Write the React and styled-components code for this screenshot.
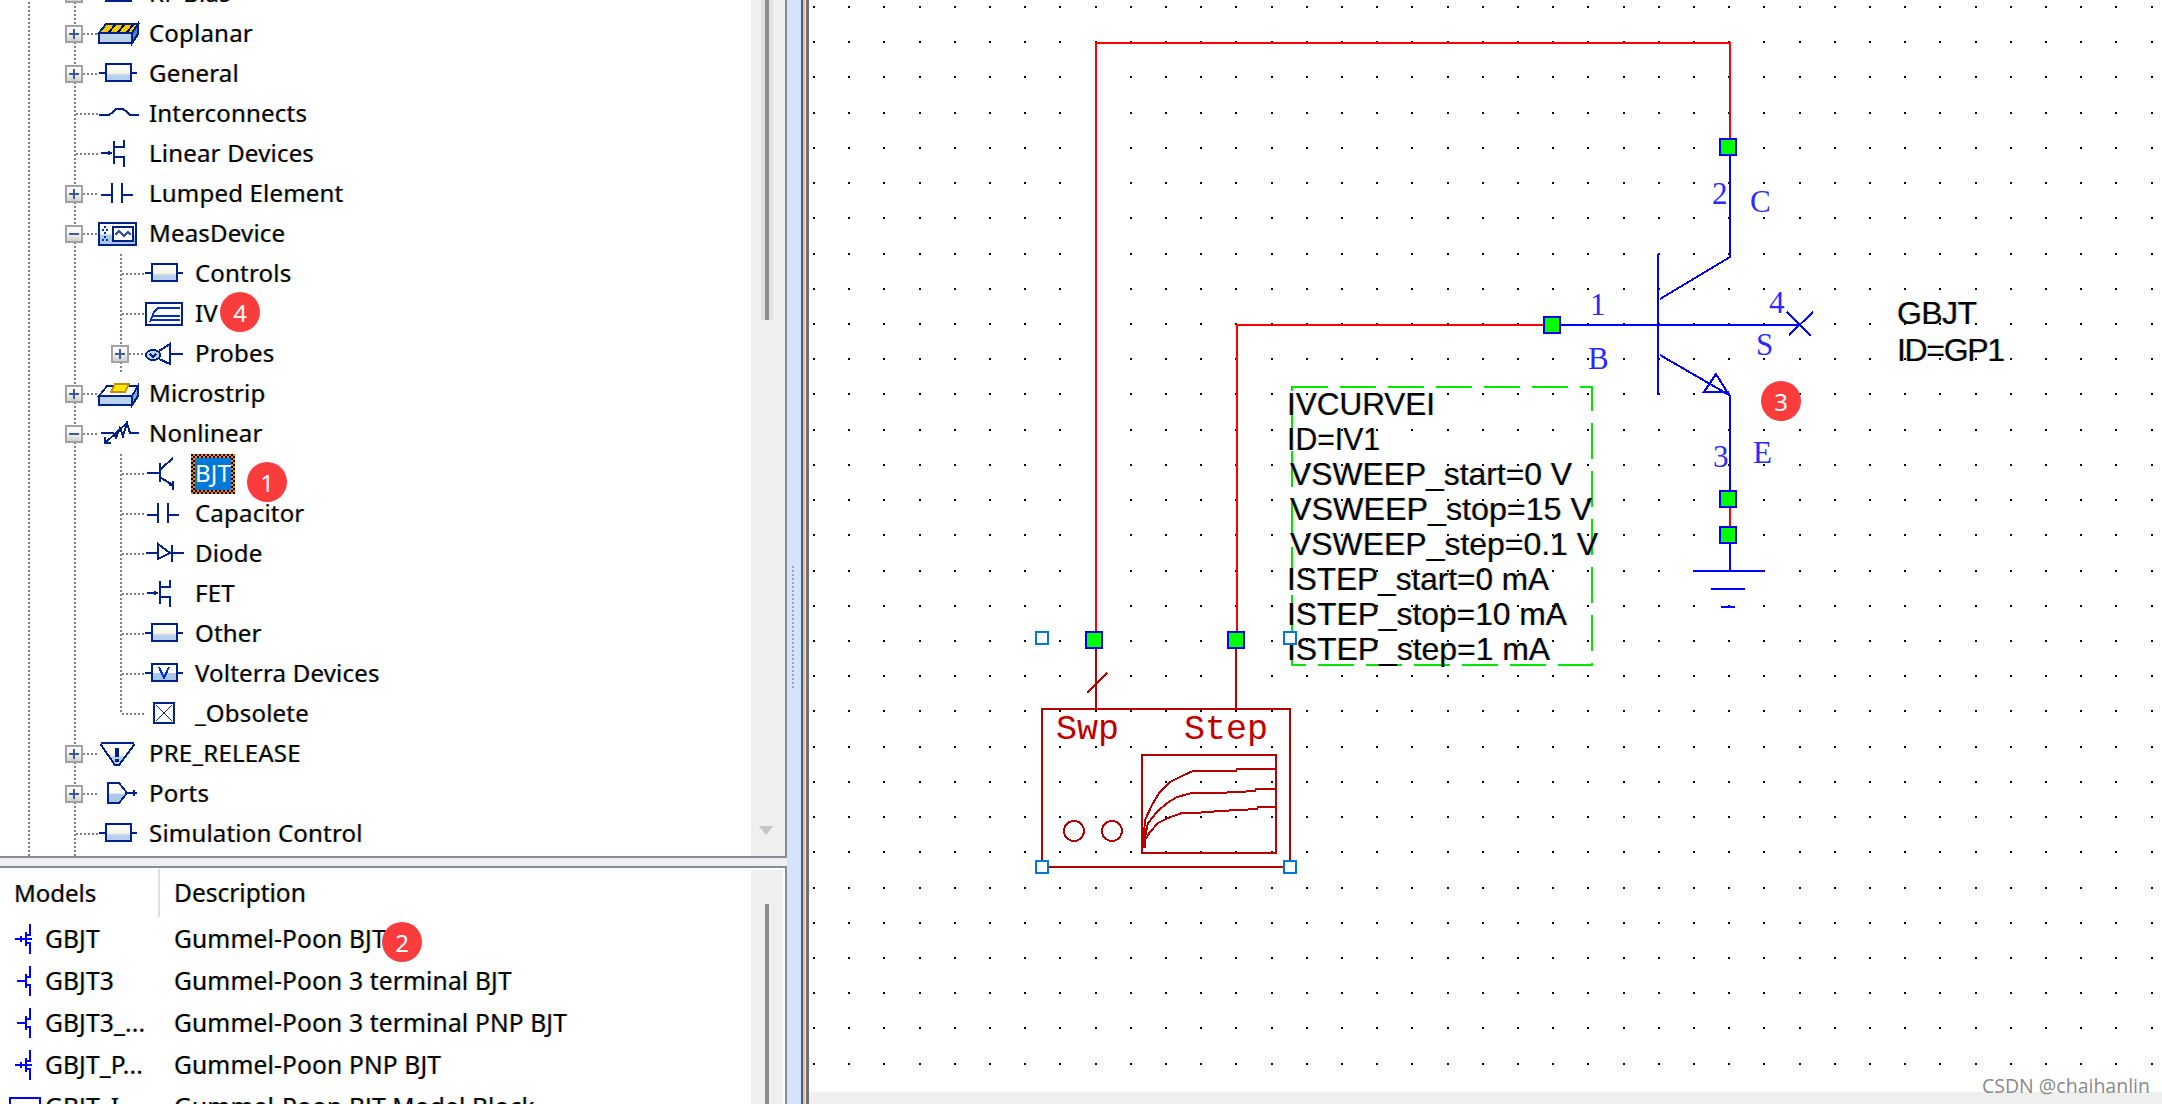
import React from 'react';
import styled, { createGlobalStyle } from 'styled-components';

const NAVY = '#002288';
const UI_FONT = '"Noto Sans", "Open Sans", sans-serif';
const FRINGE = '-0.7px 0 rgba(255,140,0,.45), 0.7px 0 rgba(0,170,255,.45)';

const Global = createGlobalStyle`
  html, body { margin: 0; padding: 0; background: #fff; overflow: hidden; }
`;

const Page = styled.div`
  position: relative;
  display: flex;
  width: 2162px;
  height: 1104px;
  overflow: hidden;
  font-family: ${UI_FONT};
  color: #000;
`;
const SidePanel = styled.div`
  width: 787px;
  flex: none;
  display: flex;
  flex-direction: column;
`;
const TreePane = styled.div`
  height: 856px;
  flex: none;
  display: flex;
  border-right: 2px solid #868b98;
  border-bottom: 2px solid #868b98;
`;
const Tree = styled.div`
  flex: 1;
  overflow: hidden;
`;
const TreeInner = styled.div`
  margin-top: -26px;
`;
const TreeScroll = styled.div`
  width: 34px;
  flex: none;
  display: flex;
  flex-direction: column;
  align-items: center;
  background: linear-gradient(to right, #efefef 10px, #e0e0e0 10px 14px, #8c8c8c 14px 18px, #e0e0e0 18px 22px, #efefef 22px) 0 0 / 100% 320px no-repeat #efefef;
  padding-top: 826px;
  box-sizing: border-box;
  padding-right: 4px;
`;
const ArrowDown = styled.div`
  width: 0;
  height: 0;
  border-left: 7px solid transparent;
  border-right: 7px solid transparent;
  border-top: 9px solid #c4c4c4;
`;
const Sash = styled.div`
  height: 8px;
  flex: none;
  background: #efefef;
`;
const ListPane = styled.div`
  flex: 1;
  min-height: 0;
  display: flex;
  border-top: 2px solid #868b98;
  border-right: 2px solid #868b98;
`;
const ListBody = styled.div`
  flex: 1;
  overflow: hidden;
`;
const ListScroll = styled.div`
  width: 32px;
  flex: none;
  margin: 2px 2px 0 0;
  padding: 34px 0 0 14px;
  box-sizing: border-box;
  background: #efefef;
`;
const ListThumb = styled.div`
  width: 4px;
  height: 100%;
  background: #8c8c8c;
`;
const ListHeader = styled.div`
  height: 50px;
  display: flex;
  align-items: center;
`;
const HeadModels = styled.div`
  width: 160px;
  height: 48px;
  flex: none;
  box-sizing: border-box;
  display: flex;
  align-items: center;
  padding: 0 0 2px 14px;
  border-right: 2px solid #e0e0e0;
  font-size: 24px;
  text-shadow: ${FRINGE};
`;
const HeadDesc = styled.div`
  padding: 0 0 2px 14px;
  font-size: 24.5px;
  text-shadow: ${FRINGE};
`;
const ListRow = styled.div`
  height: 42px;
  display: flex;
  align-items: center;
  font-size: 24.5px;
  letter-spacing: 0.18px;
  white-space: nowrap;
  text-shadow: ${FRINGE};
`;
const ModelCell = styled.div`
  width: 174px;
  flex: none;
  display: flex;
  align-items: center;
  padding-left: 13px;
  box-sizing: border-box;
  gap: 12px;
`;
const RowText = styled.span`
  padding-bottom: 1px;
`;

const Row = styled.div`
  display: flex;
  align-items: center;
  height: 40px;
  white-space: nowrap;
  font-size: 24px;
  letter-spacing: 0.2px;
  text-shadow: ${FRINGE};
`;
const vLine = () => `linear-gradient(#808080 50%, transparent 50%) 28px 0 / 2px 4px repeat-y`;
const Gutter = styled.div`
  width: 46px;
  height: 40px;
  flex: none;
  background: ${({ $line }) => ($line ? vLine() : 'none')};
`;
const Branch = styled.div`
  width: 53px;
  height: ${({ $end }) => ($end ? '20px' : '40px')};
  align-self: flex-start;
  flex: none;
  position: relative;
  display: flex;
  align-items: center;
  background: ${vLine()};
`;
const BranchInner = styled.div`
  position: absolute;
  left: 0;
  right: 0;
  top: 0;
  height: 40px;
  display: flex;
  align-items: center;
  padding-left: ${({ $box }) => ($box ? '19px' : '30px')};
  box-sizing: border-box;
`;
const Expander = styled.div`
  width: 18px;
  height: 18px;
  flex: none;
  box-sizing: border-box;
  border: 2px solid #a2a2a2;
  background: linear-gradient(#ffffff, #f2f2f2 50%, #cfcfcf);
  position: relative;
  &::before {
    content: '';
    position: absolute;
    left: 2px;
    right: 2px;
    top: 6px;
    height: 2px;
    background: #3a5a9c;
  }
  &::after {
    content: '';
    display: ${({ $open }) => ($open ? 'none' : 'block')};
    position: absolute;
    top: 2px;
    bottom: 2px;
    left: 6px;
    width: 2px;
    background: #3a5a9c;
  }
`;
const Connector = styled.div`
  flex: 1;
  height: 2px;
  background: linear-gradient(to right, #808080 50%, transparent 50%) 0 0 / 4px 2px repeat-x;
`;
const IconBox = styled.svg`
  width: 40px;
  height: 40px;
  flex: none;
  overflow: visible;
  shape-rendering: crispEdges;
`;
const Label = styled.span`
  margin-left: 6px;
  padding: 0 4px 3px;
`;
const Selected = styled.span`
  margin-left: 6px;
  height: 40px;
  box-sizing: border-box;
  padding: 4px;
  display: inline-flex;
  background: repeating-conic-gradient(#ff8000 0 25%, #000 0 50%) 0 0 / 4px 4px;
`;
const SelectedText = styled.span`
  background: #0078d7;
  color: #fff;
  display: flex;
  align-items: center;
  padding: 0 0 3px;
  text-shadow: none;
`;

const Splitter = styled.div`
  width: 22px;
  flex: none;
  box-sizing: border-box;
  padding: 565px 0 0 4px;
  background: linear-gradient(to right, #d4e4fc 14px, #3a5f9f 14px 16px, #f8b870 16px 18px, #f4f4f4 18px 19px, #707070 19px);
`;
const Grip = styled.div`
  width: 4px;
  height: 125px;
  background: radial-gradient(circle, #9aa4b4 1px, transparent 1.2px) 0 0 / 4px 4px;
`;
const Canvas = styled.div`
  flex: 1;
  min-width: 0;
  display: flex;
  flex-direction: column;
`;
const Sheet = styled.svg`
  display: block;
  width: 1353px;
  height: 1092px;
  flex: none;
  shape-rendering: crispEdges;
  background: #fff;
`;
const HScroll = styled.div`
  flex: 1;
  background: #efefef;
`;
const Badge = styled.div`
  position: absolute;
  left: ${({ $x }) => $x - 20}px;
  top: ${({ $y }) => $y - 20}px;
  width: 40px;
  height: 40px;
  border-radius: 50%;
  background: #fb3c3c;
  color: #fff;
  font-size: 24px;
  display: flex;
  align-items: center;
  justify-content: center;
`;
const Watermark = styled.div`
  position: absolute;
  left: 1982px;
  top: 1072px;
  font-family: "Open Sans", "Noto Sans", sans-serif;
  font-size: 19.5px;
  line-height: 28px;
  color: #8a8a8a;
  white-space: nowrap;
`;
const ParamText = styled.text`
  font-family: "Liberation Sans", Arial, sans-serif;
  font-size: 32px;
  fill: #000;
  text-shadow: ${FRINGE};
`;
const PinText = styled.text`
  font-family: "Liberation Serif", serif;
  font-size: 31px;
  fill: #2a2aff;
`;
const MeterText = styled.text`
  font-family: "Liberation Mono", monospace;
  font-size: 35px;
  fill: #c00000;
`;

/* ---------- tree icons (40x40, drawn in navy) ---------- */
const S = { fill: 'none', stroke: NAVY, strokeWidth: 2 };
const FILL = 'url(#pale)';

const BoxShape = () => (
  <>
    <path {...S} d="M0 19H7M32 19H38" />
    <rect x="7" y="10" width="25" height="17" fill={FILL} stroke={NAVY} strokeWidth="2" />
  </>
);
const Icons = {
  coplanar: (
    <>
      <polygon points="7,10 39,10 33,19 0,19" fill="#f0c800" stroke={NAVY} strokeWidth="2" />
      <path stroke="#000" strokeWidth="2" d="M10 18L16 11M19 18L25 11M28 18L34 11" />
      <rect x="0" y="19" width="33" height="10" fill="#bcd2ea" stroke={NAVY} strokeWidth="2" />
      <polygon points="33,19 39,10 39,20 33,29" fill="#5a7cc4" stroke={NAVY} strokeWidth="2" />
    </>
  ),
  box: <BoxShape />,
  inter: <path {...S} d="M0 21H10L14 18L17 15H24L28 18L31 21H40" />,
  fet: <path {...S} d="M2 19H13M10 17V21M15 7V30M15 13H25V6M15 23H25V33" />,
  cap: <path {...S} d="M2 21H13M13 9V29M23 9V29M23 21H34" />,
  meas: (
    <>
      <rect x="0" y="9" width="37" height="22" fill="url(#paleStrong)" stroke={NAVY} strokeWidth="2" />
      <rect x="14" y="13" width="20" height="14" fill="#fff" stroke={NAVY} strokeWidth="2" />
      <path fill="none" stroke="#3050b0" strokeWidth="1.5" d="M16 21L20 17L25 22L29 18L32 21" />
      <path stroke="#0030c0" strokeWidth="2" d="M5 13H7M3 16H5M7 16H9M5 19H7M5 23H7M3 26H5M7 26H9" />
    </>
  ),
  iv: (
    <>
      <rect x="1" y="9" width="36" height="22" fill="#fff" stroke={NAVY} strokeWidth="2" />
      <path fill="none" stroke="#0030c0" strokeWidth="2" d="M5 28L9 18L13 14H35M8 22H35M6 26H35" />
    </>
  ),
  probes: (
    <>
      <ellipse cx="8" cy="21" rx="7" ry="5" fill="#bcd2ea" stroke={NAVY} strokeWidth="2" />
      <path {...S} d="M14 17L25 10V30L14 25M25 20H38M5 20L8 23L11 20" />
    </>
  ),
  micro: (
    <>
      <polygon points="8,12 39,12 33,22 0,22" fill="#fff" stroke={NAVY} strokeWidth="2" />
      <polygon points="12,18 16,10 30,10 26,18" fill="#ffe800" stroke="#c88a00" strokeWidth="2" />
      <rect x="0" y="22" width="33" height="9" fill="#bcd2ea" stroke={NAVY} strokeWidth="2" />
      <polygon points="33,22 39,12 39,22 33,31" fill="#8aaad8" stroke={NAVY} strokeWidth="2" />
    </>
  ),
  nonlin: (
    <>
      <path {...S} d="M2 19H14L17 24L21 14L24 22L28 9L31 19H40" />
      <path {...S} d="M29 8L6 29M6 23V29H12" />
    </>
  ),
  bjt: (
    <path {...S} d="M2 19H14M15 9V28M16 15L28 4M16 24L28 31V36M28 31H24M28 31V27" />
  ),
  diode: (
    <>
      <polygon points="13,10 13,25 25,19" fill="#fff" stroke={NAVY} strokeWidth="2" />
      <path {...S} d="M1 19H13M25 19H39M27 11V28" />
    </>
  ),
  volterra: (
    <>
      <path {...S} d="M0 19H7M32 19H38" />
      <rect x="7" y="10" width="25" height="17" fill="url(#paleStrong)" stroke={NAVY} strokeWidth="2" />
      <path fill="none" stroke="#0030d0" strokeWidth="2" d="M14 13L19 24L24 13" />
    </>
  ),
  obsolete: (
    <>
      <rect x="9" y="9" width="20" height="20" fill="#fff" stroke={NAVY} strokeWidth="2" />
      <path fill="none" stroke={NAVY} strokeWidth="1" d="M11 11L27 27M27 11L11 27" />
    </>
  ),
  pre: (
    <>
      <path fill="url(#pale)" stroke={NAVY} strokeWidth="2" d="M3 9H34L35 11L20 31H16L2 11Z" />
      <rect x="16" y="14" width="4" height="9" fill={NAVY} />
      <rect x="16" y="25" width="4" height="3" fill={NAVY} />
    </>
  ),
  ports: (
    <>
      <polygon points="9,9 20,9 28,19 20,29 9,29" fill="url(#paleStrong)" stroke={NAVY} strokeWidth="2" />
      <path {...S} d="M28 19H38M35 16V22" />
    </>
  ),
};

const TREE = [
  { level: 1, box: 'plus', icon: 'box', text: 'RF Bias' },
  { level: 1, box: 'plus', icon: 'coplanar', text: 'Coplanar' },
  { level: 1, box: 'plus', icon: 'box', text: 'General' },
  { level: 1, icon: 'inter', text: 'Interconnects' },
  { level: 1, icon: 'fet', text: 'Linear Devices' },
  { level: 1, box: 'plus', icon: 'cap', text: 'Lumped Element' },
  { level: 1, box: 'minus', icon: 'meas', text: 'MeasDevice' },
  { level: 2, icon: 'box', text: 'Controls' },
  { level: 2, icon: 'iv', text: 'IV' },
  { level: 2, box: 'plus', icon: 'probes', text: 'Probes', end: true },
  { level: 1, box: 'plus', icon: 'micro', text: 'Microstrip' },
  { level: 1, box: 'minus', icon: 'nonlin', text: 'Nonlinear' },
  { level: 2, icon: 'bjt', text: 'BJT', selected: true },
  { level: 2, icon: 'cap', text: 'Capacitor' },
  { level: 2, icon: 'diode', text: 'Diode' },
  { level: 2, icon: 'fet', text: 'FET' },
  { level: 2, icon: 'box', text: 'Other' },
  { level: 2, icon: 'volterra', text: 'Volterra Devices' },
  { level: 2, icon: 'obsolete', text: '_Obsolete', end: true },
  { level: 1, box: 'plus', icon: 'pre', text: 'PRE_RELEASE' },
  { level: 1, box: 'plus', icon: 'ports', text: 'Ports' },
  { level: 1, icon: 'box', text: 'Simulation Control' },
];

const TreeRow = ({ level, box, icon, text, selected, end }) => {
  const isLastChild = end && level === 2 && !box;
  return (
    <Row>
      <Gutter $line />
      {level === 2 && <Gutter $line />}
      <Branch $end={isLastChild}>
        <BranchInner $box={!!box}>
          {box && <Expander $open={box === 'minus'} />}
          <Connector />
        </BranchInner>
      </Branch>
      <IconBox viewBox="0 0 40 40">{Icons[icon]}</IconBox>
      {selected ? (
        <Selected>
          <SelectedText>{text}</SelectedText>
        </Selected>
      ) : (
        <Label>{text}</Label>
      )}
    </Row>
  );
};

const ListIcon = styled.svg`
  width: 20px;
  height: 30px;
  flex: none;
  shape-rendering: crispEdges;
  overflow: visible;
`;
const ModelIcon = ({ kind }) => (
  <ListIcon viewBox="0 0 20 30">
    {kind === 'box' ? (
      <rect x="-3" y="6" width="30" height="18" fill="#fff" stroke="#0000ff" strokeWidth="2" />
    ) : (
      <path
        fill="none"
        stroke="#0000ff"
        strokeWidth="2"
        d={
          kind === 'four'
            ? 'M2 15H12M8 12V18M13 8V22M13 11H17V0M13 19H17V30M13 15H19'
            : 'M4 15H12M13 8V22M13 11H17V0M13 19H17V30'
        }
      />
    )}
  </ListIcon>
);
const MODELS = [
  { kind: 'four', name: 'GBJT', desc: 'Gummel-Poon BJT' },
  { kind: 'three', name: 'GBJT3', desc: 'Gummel-Poon 3 terminal BJT' },
  { kind: 'three', name: 'GBJT3_...', desc: 'Gummel-Poon 3 terminal PNP BJT' },
  { kind: 'four', name: 'GBJT_P...', desc: 'Gummel-Poon PNP BJT' },
  { kind: 'box', name: 'GBJT_I', desc: 'Gummel-Poon BJT Model Block' },
];

/* ---------- schematic ---------- */
const dotsPath = (() => {
  let d = '';
  for (let i = 0; i < 39; i++) {
    for (let j = 0; j < 31; j++) {
      const x = Math.round(814 + 35.2 * i) - 1;
      const y = Math.round(7 + 35.22 * j) - 1;
      d += `M${x} ${y}h2v2h-2z`;
    }
  }
  return d;
})();

const Node = ({ x, y }) => (
  <rect x={x - 8} y={y - 8} width="16" height="16" fill="#00ff00" stroke="#0000ff" strokeWidth="2" />
);
const Handle = ({ x, y }) => (
  <rect x={x - 6} y={y - 6} width="12" height="12" fill="#fff" stroke="#0078d7" strokeWidth="2" />
);

const PARAMS = [
  ['IVCURVEI', 1287, 415, 148],
  ['ID=IV1', 1287, 450, 93],
  ['VSWEEP_start=0 V', 1290, 485, 282],
  ['VSWEEP_stop=15 V', 1290, 520, 302],
  ['VSWEEP_step=0.1 V', 1290, 555, 308],
  ['ISTEP_start=0 mA', 1287, 590, 262],
  ['ISTEP_stop=10 mA', 1287, 625, 280],
  ['ISTEP_step=1 mA', 1287, 660, 263],
];

const Schematic = () => (
  <Sheet viewBox="809 0 1353 1092">
    <path d={dotsPath} fill="#000" />
    {/* wires */}
    <path fill="none" stroke="#ff0000" strokeWidth="2" d="M1096 632V43H1730V138M1237 632V325H1543M1730 507V527" />
    {/* transistor */}
    <path
      fill="none"
      stroke="#0000ff"
      strokeWidth="2"
      d="M1730 156V257L1660 299M1658 254V395M1561 325H1800M1787 312L1811 336M1813 312L1789 335M1660 355L1729 395M1729 395L1716 374L1704 392H1729M1730 395V491M1730 543V571M1693 571H1764M1711 589H1745M1721 607H1735"
    />
    <Node x={1728} y={147} />
    <Node x={1552} y={325} />
    <Node x={1728} y={499} />
    <Node x={1728} y={535} />
    <PinText x="1712" y="204">2</PinText>
    <PinText x="1750" y="212">C</PinText>
    <PinText x="1590" y="315">1</PinText>
    <PinText x="1588" y="369">B</PinText>
    <PinText x="1769" y="313">4</PinText>
    <PinText x="1756" y="355">S</PinText>
    <PinText x="1713" y="467">3</PinText>
    <PinText x="1753" y="463">E</PinText>
    <ParamText x="1897" y="324" textLength="80">GBJT</ParamText>
    <ParamText x="1897" y="361" textLength="108">ID=GP1</ParamText>

    {/* IV curve block */}
    <rect x="1292" y="387" width="300" height="278" fill="none" stroke="#00e600" strokeWidth="2" strokeDasharray="36 12" />
    {PARAMS.map(([t, x, y, w]) => (
      <ParamText key={t} x={x} y={y} textLength={w} lengthAdjust="spacingAndGlyphs">{t}</ParamText>
    ))}
    <path fill="none" stroke="#b80000" strokeWidth="2" d="M1096 648V709M1236 648V709M1087 693L1107 673" />
    <Node x={1094} y={640} />
    <Node x={1236} y={640} />
    <rect x="1042" y="709" width="248" height="158" fill="none" stroke="#b80000" strokeWidth="2" />
    <rect x="1142" y="755" width="134" height="98" fill="none" stroke="#b80000" strokeWidth="2" />
    <path
      fill="none"
      stroke="#b80000"
      strokeWidth="2"
      d="M1143 847L1145 820L1152 805L1159 793L1170 782L1182 776L1193 771H1236L1237 769H1276M1144 842L1148 823L1157 812L1167 803L1177 797L1192 793H1218L1255 791L1256 789H1276M1145 840L1150 832L1158 823L1168 818L1182 813L1195 813L1220 811L1257 809L1258 807H1276"
    />
    <rect x="1142" y="828" width="4" height="20" fill="#b80000" />
    <circle cx="1074" cy="831" r="10" fill="none" stroke="#b80000" strokeWidth="2" />
    <circle cx="1112" cy="831" r="10" fill="none" stroke="#b80000" strokeWidth="2" />
    <MeterText x="1056" y="739">Swp</MeterText>
    <MeterText x="1184" y="739">Step</MeterText>
    <Handle x={1042} y={867} />
    <Handle x={1290} y={867} />
    <Handle x={1042} y={638} />
    <Handle x={1290} y={638} />
  </Sheet>
);

export default function App() {
  return (
    <Page>
      <Global />
      <svg width="0" height="0" style={{ position: 'absolute' }}>
        <defs>
          <linearGradient id="pale" x1="0" y1="0" x2="0" y2="1">
            <stop offset="0" stopColor="#fff" />
            <stop offset="0.55" stopColor="#f8f4e4" />
            <stop offset="0.65" stopColor="#b8d0ec" />
            <stop offset="1" stopColor="#b8d0ec" />
          </linearGradient>
          <linearGradient id="paleStrong" x1="0" y1="0" x2="0" y2="1">
            <stop offset="0" stopColor="#fff" />
            <stop offset="0.5" stopColor="#fff" />
            <stop offset="0.55" stopColor="#b0cae8" />
            <stop offset="1" stopColor="#a8c4e8" />
          </linearGradient>
        </defs>
      </svg>
      <SidePanel>
        <TreePane>
          <Tree>
            <TreeInner>
              {TREE.map((r) => (
                <TreeRow key={r.text} {...r} />
              ))}
              <Row>
                <Gutter $line />
                <Gutter $line />
              </Row>
            </TreeInner>
          </Tree>
          <TreeScroll>
            <ArrowDown />
          </TreeScroll>
        </TreePane>
        <Sash />
        <ListPane>
          <ListBody>
            <ListHeader>
              <HeadModels>Models</HeadModels>
              <HeadDesc>Description</HeadDesc>
            </ListHeader>
            {MODELS.map((m) => (
              <ListRow key={m.name}>
                <ModelCell>
                  <ModelIcon kind={m.kind} />
                  <RowText>{m.name}</RowText>
                </ModelCell>
                <RowText>{m.desc}</RowText>
              </ListRow>
            ))}
          </ListBody>
          <ListScroll>
            <ListThumb />
          </ListScroll>
        </ListPane>
      </SidePanel>
      <Splitter>
        <Grip />
      </Splitter>
      <Canvas>
        <Schematic />
        <HScroll />
      </Canvas>
      <Badge $x={240} $y={312}>4</Badge>
      <Badge $x={267} $y={482}>1</Badge>
      <Badge $x={402} $y={942}>2</Badge>
      <Badge $x={1781} $y={401}>3</Badge>
      <Watermark>CSDN @chaihanlin</Watermark>
    </Page>
  );
}
